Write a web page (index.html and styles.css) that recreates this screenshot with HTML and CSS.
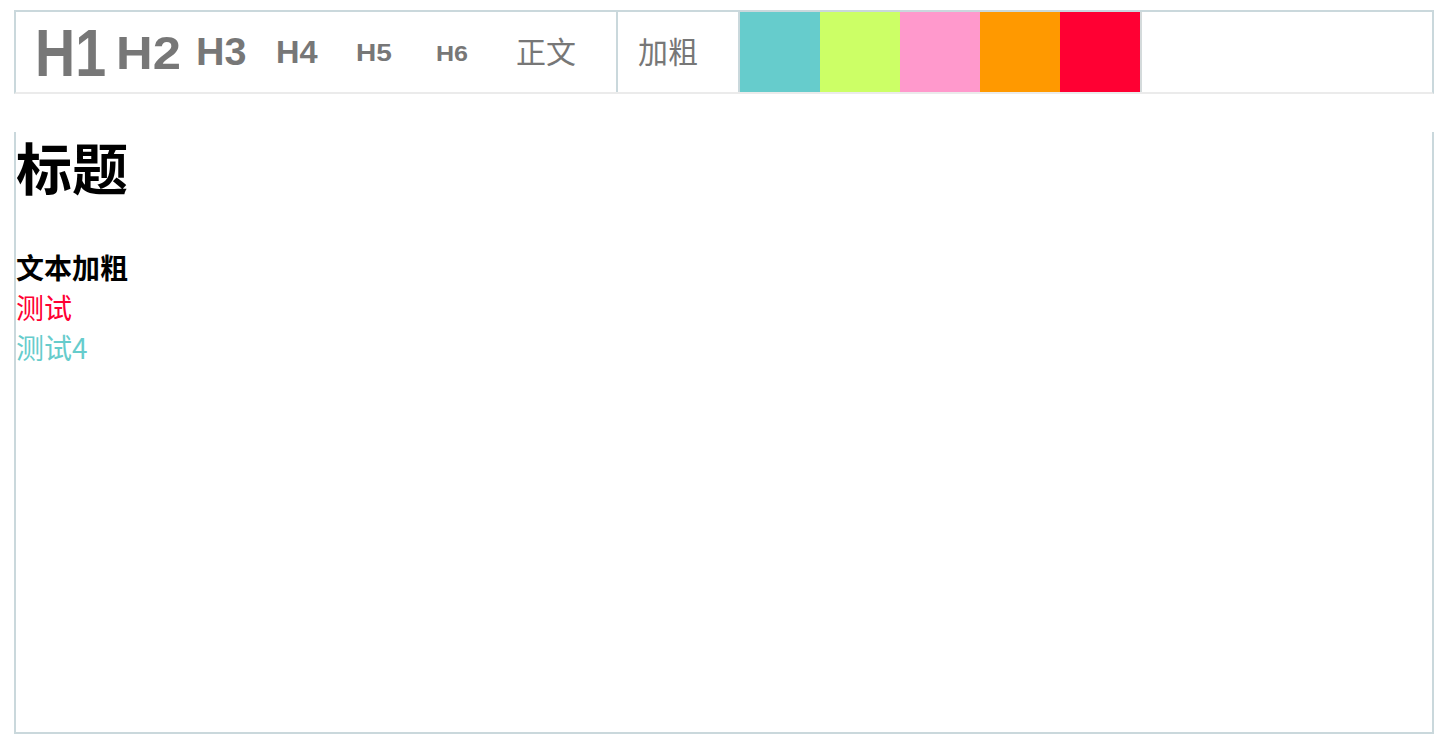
FILE: index.html
```html
<!DOCTYPE html>
<html lang="zh-CN">
<head>
<meta charset="utf-8">
<title>Editor</title>
<link rel="stylesheet" href="styles.css">
</head>
<body>
<div class="page">
  <div class="toolbar">
    <div class="tool"><span class="hd hd1">H1</span></div>
    <div class="tool"><span class="hd hd2">H2</span></div>
    <div class="tool"><span class="hd hd3">H3</span></div>
    <div class="tool"><span class="hd hd4">H4</span></div>
    <div class="tool"><span class="hd hd5">H5</span></div>
    <div class="tool"><span class="hd hd6">H6</span></div>
    <div class="tool tool-wide"><span class="cn">正文</span></div>
    <div class="tool tool-wide tool-sep"><span class="cn">加粗</span></div>
    <div class="colors">
      <div class="swatch teal"></div>
      <div class="swatch lime"></div>
      <div class="swatch pink"></div>
      <div class="swatch orange"></div>
      <div class="swatch red"></div>
    </div>
  </div>
  <div class="editor">
    <h1 class="title">标题</h1>
    <p class="line bold">文本加粗</p>
    <p class="line c-red">测试</p>
    <p class="line c-teal">测试4</p>
  </div>
</div>
</body>
</html>
```
FILE: styles.css
```css
html, body {
  margin: 0;
  padding: 0;
  background: #fff;
}
.page {
  padding: 10px 14px 0 14px;
  font-family: "Noto Sans CJK SC", "Liberation Sans", sans-serif;
}
.toolbar {
  display: flex;
  height: 80px;
  border: 2px solid #cad8dc;
  border-bottom-color: #ebebeb;
}
.tool {
  flex: 0 0 80px;
  min-width: 0;
  box-sizing: border-box;
  padding-left: 20px;
  display: flex;
  align-items: center;
  color: #777;
  white-space: nowrap;
}
.tool-wide {
  flex-basis: 120px;
}
.tool-sep {
  border-left: 2px solid #cad8dc;
  flex-basis: 122px;
}
.hd {
  display: inline-block;
  font-family: "Liberation Sans", Arial, sans-serif;
  font-weight: bold;
  line-height: 1;
  transform-origin: left center;
}
.hd1 { font-size: 67px; margin-left: -1px; transform: scaleX(0.83); }
.hd2 { font-size: 47px; transform: scaleX(1.08); margin-top: 1px; }
.hd3 { font-size: 38px; transform: scaleX(1.04); }
.hd4 { font-size: 31px; transform: scaleX(1.05); }
.hd5 { font-size: 23px; transform: scaleX(1.22); margin-top: 3px; }
.hd6 { font-size: 22px; transform: scaleX(1.14); margin-top: 3px; }
.cn {
  font-size: 30px;
  line-height: 1;
  margin-top: -5px;
}
.colors {
  display: flex;
  border-left: 2px solid #cad8dc;
  border-right: 2px solid #d4dadb;
}
.swatch {
  width: 80px;
  height: 80px;
}
.teal { background: #66cccc; }
.lime { background: #ccff66; }
.pink { background: #ff99cc; }
.orange { background: #ff9900; }
.red { background: #ff0033; }
.editor {
  margin-top: 38px;
  box-sizing: border-box;
  height: 602px;
  padding-top: 6px;
  border: 2px solid #cad8dc;
  border-top: none;
}
.title {
  margin: 0;
  font-size: 56px;
  line-height: 56px;
  font-weight: bold;
  color: #000;
}
.line {
  margin: 0;
  font-size: 28px;
  line-height: 40px;
}
.line.bold {
  margin-top: 53px;
  font-weight: bold;
  color: #000;
}
.c-red { color: #ff0033; }
.c-teal { color: #66cccc; }
```
